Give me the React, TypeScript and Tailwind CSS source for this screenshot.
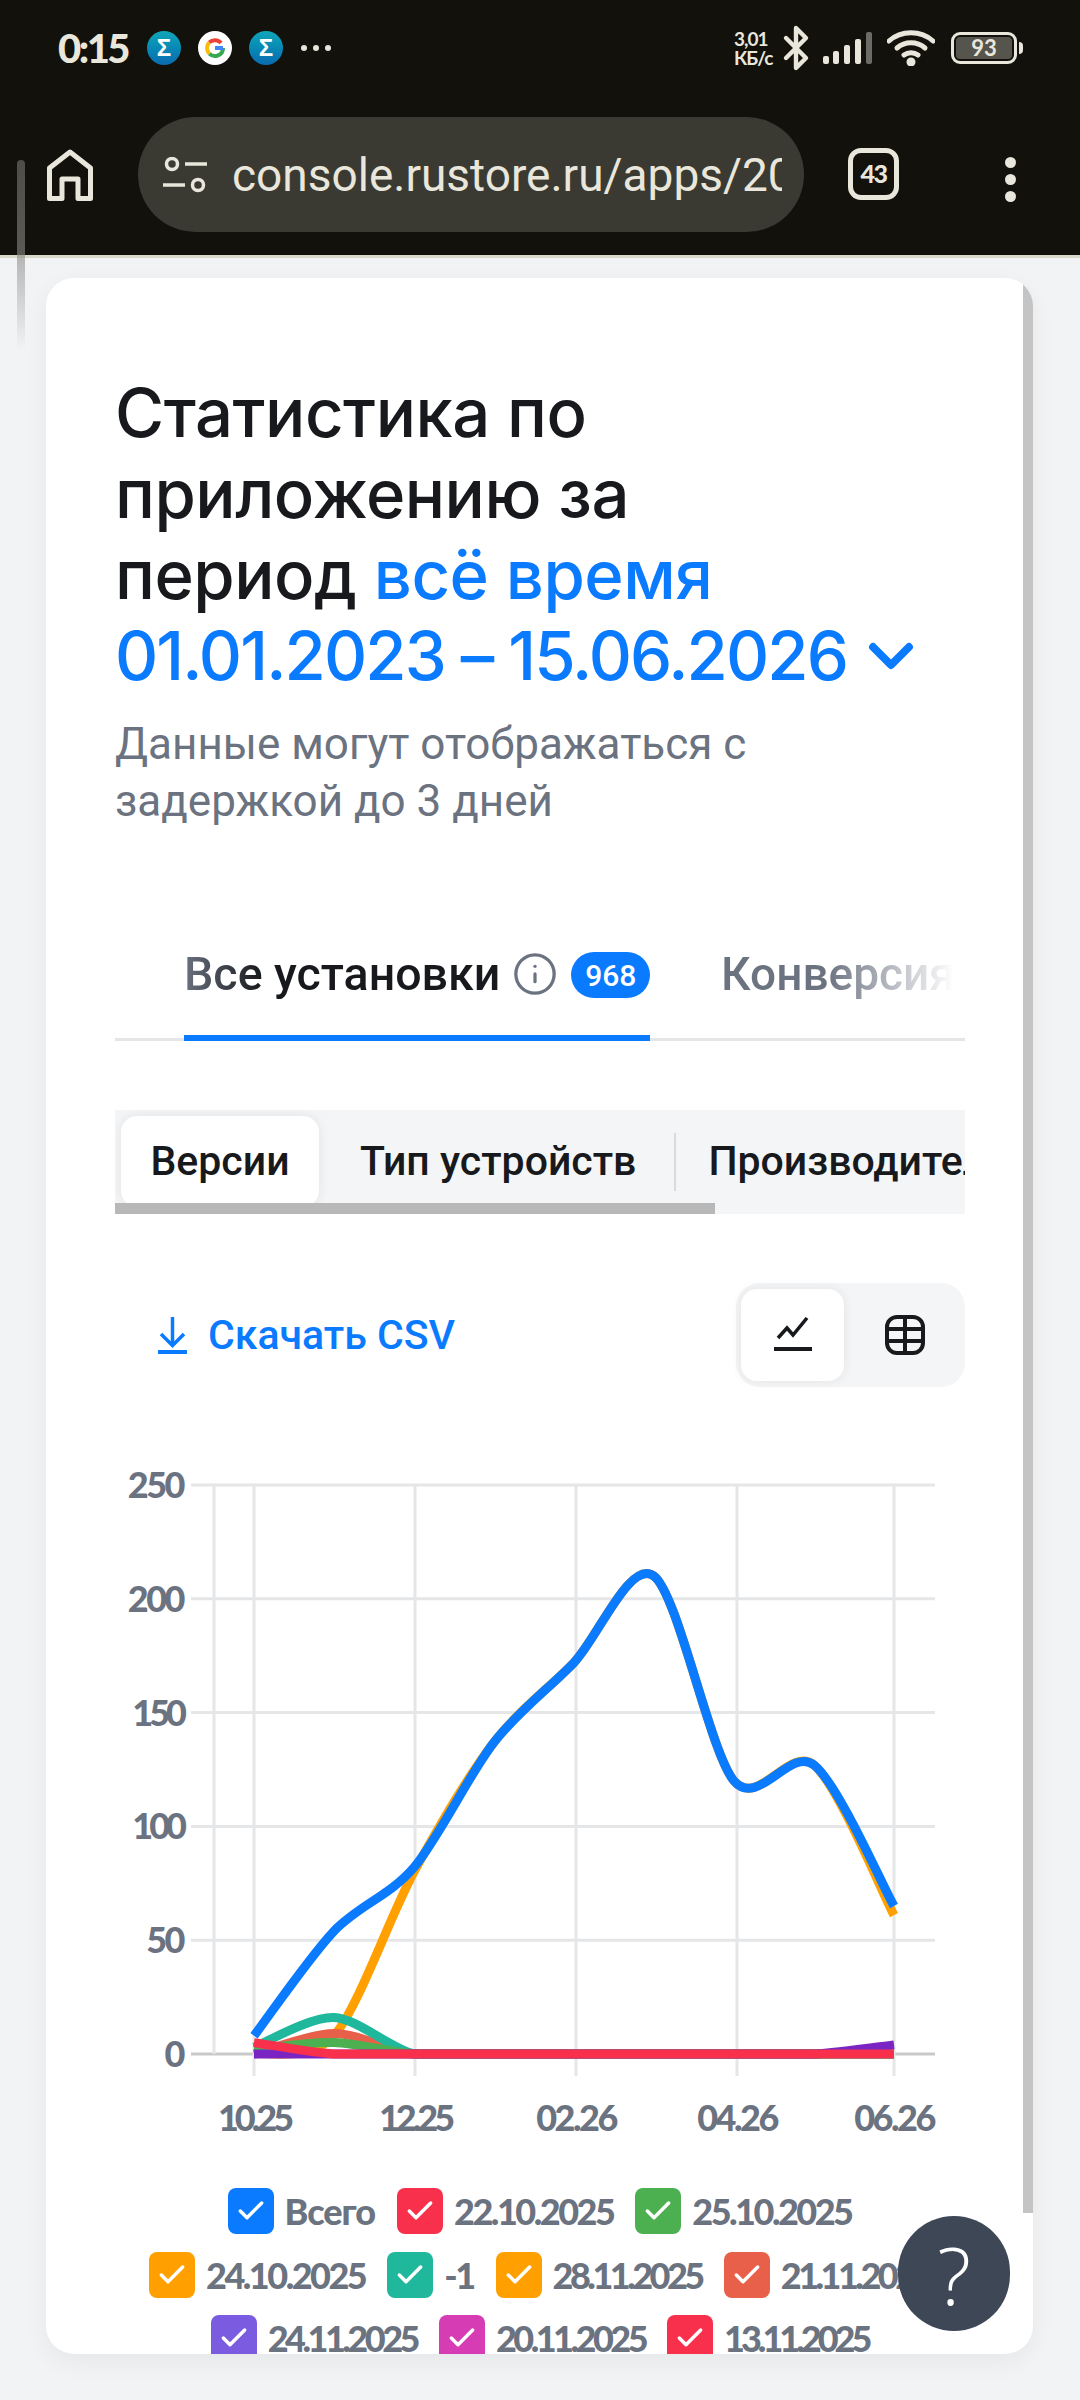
import * as React from "react";
import { Bluetooth, Check, ChevronDown, Info } from "lucide-react";

const CHART_FONT = "font-['Lato',sans-serif]";

const MONTH_STEP = 80;
const FIRST_MONTH_X = 208;
const ZERO_Y = 585;
const UNIT = 2.276;

const series: { color: string; values: number[] }[] = [
  { color: "#ffa000", values: [0, 8, 80, 137, 172, 210, 120, 127, 61] },
  { color: "#e9604a", values: [0, 9, 0, 0, 0, 0, 0, 0, 0] },
  { color: "#1fb89c", values: [3, 16, 0, 0, 0, 0, 0, 0, 0] },
  { color: "#4caf50", values: [2, 5, 0, 0, 0, 0, 0, 0, 0] },
  { color: "#7b24c4", values: [0, 0, 0, 0, 0, 0, 0, 0, 4] },
  { color: "#0a7aff", values: [8, 54, 82, 137, 172, 210, 120, 127, 65] },
  { color: "#f9304c", values: [5, 0, 0, 0, 0, 0, 0, 0, 0] },
];

const yTicks = [250, 200, 150, 100, 50, 0];
const xTicks = ["10.25", "12.25", "02.26", "04.26", "06.26"];

const legendRows: { label: string; color: string; tracking: string }[][] = [
  [
    { label: "Всего", color: "bg-[#0a7aff]", tracking: "tracking-[-1px]" },
    { label: "22.10.2025", color: "bg-[#f9304c]", tracking: "tracking-[-2.5px]" },
    { label: "25.10.2025", color: "bg-[#4caf50]", tracking: "tracking-[-2.5px]" },
  ],
  [
    { label: "24.10.2025", color: "bg-[#ffa000]", tracking: "tracking-[-2.5px]" },
    { label: "-1", color: "bg-[#1fb89c]", tracking: "tracking-[-2.5px]" },
    { label: "28.11.2025", color: "bg-[#ffa000]", tracking: "tracking-[-3.5px]" },
    { label: "21.11.2025", color: "bg-[#e9604a]", tracking: "tracking-[-3.5px]" },
  ],
  [
    { label: "24.11.2025", color: "bg-[#7b5ce0]", tracking: "tracking-[-3.5px]" },
    { label: "20.11.2025", color: "bg-[#d63cb4]", tracking: "tracking-[-3.5px]" },
    { label: "13.11.2025", color: "bg-[#f9304c]", tracking: "tracking-[-4px]" },
  ],
];

// smooth line through the monthly points, flat where the data is flat
function linePath(values: number[]) {
  const pts = values.map((v, i) => [FIRST_MONTH_X + i * MONTH_STEP, ZERO_Y - v * UNIT]);
  let d = `M${pts[0][0]} ${pts[0][1]}`;
  for (let i = 0; i < pts.length - 1; i++) {
    const p0 = pts[Math.max(i - 1, 0)];
    const p1 = pts[i];
    const p2 = pts[i + 1];
    const p3 = pts[Math.min(i + 2, pts.length - 1)];
    const flat = p1[1] === p2[1];
    const k = flat ? 0 : 0.15;
    d += ` C${p1[0] + (p2[0] - p0[0]) * k} ${p1[1] + (p2[1] - p0[1]) * k} ${p2[0] - (p3[0] - p1[0]) * k} ${p2[1] - (p3[1] - p1[1]) * k} ${p2[0]} ${p2[1]}`;
  }
  return d;
}

function Chart() {
  return (
    <svg viewBox="0 0 987 680" className="block h-[680px] w-[987px]">
      {yTicks.map((tick) => {
        const y = ZERO_Y - tick * UNIT;
        return (
          <g key={tick}>
            <line x1={145} x2={889} y1={y} y2={y} stroke={tick === 0 ? "#c9c9cb" : "#e5e6e8"} strokeWidth={3} />
            <text x={137} y={y + 13} textAnchor="end" fontSize={36} fontWeight={900} fill="#6b7280" letterSpacing={String(tick).includes("1") ? -4 : -2.5} fontFamily="Lato, sans-serif">
              {tick}
            </text>
          </g>
        );
      })}
      <line x1={168} x2={168} y1={16} y2={585} stroke="#e5e6e8" strokeWidth={3} />
      {xTicks.map((tick, i) => {
        const x = FIRST_MONTH_X + i * 2 * MONTH_STEP + (i === 4 ? 0 : i);
        return (
          <g key={tick}>
            <line x1={x} x2={x} y1={16} y2={607} stroke="#e5e6e8" strokeWidth={3} />
            <text x={x} y={662} textAnchor="middle" fontSize={36} fontWeight={900} fill="#6b7280" letterSpacing={tick.includes("1") ? -4 : -2.5} fontFamily="Lato, sans-serif">
              {tick}
            </text>
          </g>
        );
      })}
      {series.map((s) => (
        <path key={s.color} d={linePath(s.values)} fill="none" stroke={s.color} strokeWidth={9} />
      ))}
    </svg>
  );
}

function LegendItem({ label, color, tracking }: { label: string; color: string; tracking: string }) {
  return (
    <div className="flex shrink-0 items-center gap-[11px]">
      <span className={`flex h-[46px] w-[46px] items-center justify-center rounded-[8px] ${color}`}>
        <Check className="h-[32px] w-[32px] text-white" strokeWidth={2.6} />
      </span>
      <span className={`${CHART_FONT} text-[36px] leading-[46px] font-black text-[#6b7280] ${tracking}`}>{label}</span>
    </div>
  );
}

function SigmaBadge() {
  return (
    <span className="flex h-[34px] w-[34px] items-center justify-center rounded-full bg-gradient-to-b from-[#11a6b8] to-[#0b6bb0] font-['Liberation_Sans',sans-serif] text-[24px] leading-none font-bold text-white">
      Σ
    </span>
  );
}

function GoogleBadge() {
  return (
    <svg width="34" height="34" viewBox="0 0 34 34">
      <circle cx="17" cy="17" r="17" fill="#fff" />
      <path d="M25 17a8 8 0 0 1-13.7 5.6" fill="none" stroke="#34a853" strokeWidth="4" />
      <path d="M11.3 22.6a8 8 0 0 1 0-11.2" fill="none" stroke="#fbbc05" strokeWidth="4" />
      <path d="M11.3 11.4A8 8 0 0 1 23 12" fill="none" stroke="#ea4335" strokeWidth="4" />
      <path d="M17 17h8" fill="none" stroke="#4285f4" strokeWidth="4" />
    </svg>
  );
}

function StatusBar() {
  return (
    <div className="flex h-[96px] items-center justify-between pr-[58px] pl-[58px] text-[#e9e7dc]">
      <div className="flex items-center">
        <span className={`${CHART_FONT} w-[89px] text-[40px] leading-none font-black tracking-[-2.5px]`}>0:15</span>
        <div className="flex items-center gap-[17px]">
          <SigmaBadge />
          <GoogleBadge />
          <SigmaBadge />
        </div>
        <span className="ml-[18px] flex gap-[6px]">
          <span className="h-[6px] w-[6px] rounded-full bg-[#e9e7dc]" />
          <span className="h-[6px] w-[6px] rounded-full bg-[#e9e7dc]" />
          <span className="h-[6px] w-[6px] rounded-full bg-[#e9e7dc]" />
        </span>
      </div>
      <div className="-mr-[1px] flex items-center">
        <div className={`${CHART_FONT} flex w-[44px] flex-col text-[19px] leading-[19px] font-bold tracking-[-1px]`}>
          <span>3,01</span>
          <span>КБ/с</span>
        </div>
        <Bluetooth className="mr-[3px] ml-[-6px] h-[48px] w-[48px]" strokeWidth={2.2} />
        <svg width="50" height="32" viewBox="0 0 50 32">
          <rect x="0" y="24" width="6" height="8" rx="2" fill="#e9e7dc" />
          <rect x="10" y="19" width="6" height="13" rx="2" fill="#e9e7dc" />
          <rect x="21" y="13" width="6" height="19" rx="2" fill="#e9e7dc" />
          <rect x="32" y="7" width="6" height="25" rx="2" fill="#e9e7dc" />
          <rect x="43" y="0" width="6" height="32" rx="2" fill="#6d6c64" />
        </svg>
        <svg width="48" height="36" viewBox="0 0 48 36" fill="none" stroke="#e9e7dc" strokeWidth="5" strokeLinecap="round" className="ml-[14px]">
          <path d="M2 11C14 0 34 0 46 11" />
          <path d="M10 18c8-7 20-7 28 0" />
          <path d="M17 25c4-3 10-3 14 0" />
          <circle cx="24" cy="32" r="2" fill="#e9e7dc" />
        </svg>
        <div className="ml-[16px] flex items-center">
          <div className="flex h-[32px] w-[66px] items-center justify-center rounded-[9px] border-[3px] border-[#e9e7dc] p-[2px]">
            <span className={`${CHART_FONT} flex h-full w-full items-center justify-center rounded-[4px] bg-[#55544d] text-[22px] leading-none font-bold text-[#e9e7dc]`}>
              93
            </span>
          </div>
          <span className="ml-[2px] h-[12px] w-[4px] rounded-r-full bg-[#e9e7dc]" />
        </div>
      </div>
    </div>
  );
}

function BrowserBar() {
  return (
    <div className="flex h-[162px] items-start border-b-[3px] border-[#d9d9c9] pt-[21px] text-[#e9e7dc]">
      <svg width="46" height="52" viewBox="0 0 46 52" fill="none" stroke="#e9e7dc" strokeWidth="5" className="mt-[32px] ml-[47px]">
        <path d="M2.500 49.500V19L23 3l20.500 16v30.500H31V30H15v19.500Z" strokeLinejoin="round" />
      </svg>
      <div className="ml-[45px] flex h-[115px] w-[666px] items-center rounded-full bg-[#3a3a32] pr-[22px] pl-[25px]">
        <svg width="44" height="36" viewBox="0 0 44 36" fill="none" stroke="#e9e7dc" strokeWidth="3.500" className="shrink-0">
          <circle cx="9" cy="7" r="5.500" />
          <path d="M22 7h22M0 28h22" />
          <circle cx="35" cy="28" r="5.500" />
        </svg>
        <span className="ml-[25px] overflow-hidden font-['Roboto',sans-serif] text-[46px] leading-[60px] whitespace-nowrap text-[#e9e7dc]">
          console.rustore.ru/apps/2098
        </span>
      </div>
      <div className={`${CHART_FONT} mt-[31px] ml-[44px] flex h-[52px] w-[51px] items-center justify-center rounded-[13px] border-[5px] border-[#e9e7dc] text-[25px] font-black tracking-[-1.5px]`}>
        43
      </div>
      <div className="mt-[40px] ml-[106px] flex flex-col gap-[6px]">
        <span className="h-[11px] w-[11px] rounded-full bg-[#e9e7dc]" />
        <span className="h-[11px] w-[11px] rounded-full bg-[#e9e7dc]" />
        <span className="h-[11px] w-[11px] rounded-full bg-[#e9e7dc]" />
      </div>
    </div>
  );
}

export default function App() {
  return (
    <div className="relative h-[2400px] w-[1080px] overflow-hidden bg-[#f2f3f5] font-['Roboto',sans-serif]">
      <div className="bg-[#12110b]">
        <StatusBar />
        <BrowserBar />
      </div>
      {/* page scroll indicator of the browser */}
      <div className="absolute top-[160px] left-[17px] h-[190px] w-[8px] rounded-full bg-gradient-to-b from-[#77766f] via-[#8b8b88] to-transparent opacity-60" />

      <div className="relative mt-[20px] ml-[46px] h-[2076px] w-[987px] overflow-hidden rounded-[28px] bg-white shadow-[0_8px_24px_rgba(0,0,0,0.05)]">
        <h1 className="mt-[94px] ml-[69px] font-['Inter',sans-serif] text-[67px] leading-[81px] font-medium tracking-[-0.5px] text-[#17191c]">
          Статистика по
          <br />
          приложению за
          <br />
          период <span className="text-[#0a7aff]">всё время</span>
          <br />
          <span className="inline-flex items-center gap-[8px] tracking-[-1.9px] text-[#0a7aff]">
            01.01.2023 – 15.06.2026
            <ChevronDown className="h-[72px] w-[72px]" strokeWidth={2.6} />
          </span>
        </h1>
        <p className="mt-[20px] ml-[69px] text-[44px] leading-[57px] text-[#6b7280]">
          Данные могут отображаться с
          <br />
          задержкой до 3 дней
        </p>

        {/* main tabs */}
        <div className="relative mt-[117px] ml-[69px] flex h-[94px] w-[850px] overflow-hidden pl-[69px]">
          <div className="absolute right-0 bottom-0 left-0 h-[3px] bg-[#e4e5e7]" />
          <div className="relative flex h-[94px] w-[466px] shrink-0 items-start border-b-[6px] border-[#0a7aff]">
            <span className="bg-gradient-to-r from-[#6b7280] to-[#17191c] to-[25%] bg-clip-text text-[46.500px] leading-[54px] font-medium whitespace-nowrap text-transparent">
              Все установки
            </span>
            <Info className="mt-[4px] ml-[12px] h-[46px] w-[46px] shrink-0 text-[#6b7280]" strokeWidth={1.7} />
            <span className="mt-[5px] ml-[13px] flex h-[46px] w-[79px] shrink-0 items-center justify-center rounded-full bg-[#0a7aff] text-[30px] font-medium text-white">
              968
            </span>
          </div>
          <span className="ml-[71px] w-[233px] overflow-hidden bg-gradient-to-r from-[#6b7280] from-[45%] to-transparent bg-clip-text text-[46px] leading-[54px] font-medium whitespace-nowrap text-transparent">
            Конверсия
          </span>
        </div>

        {/* sub tabs */}
        <div className="relative mt-[69px] ml-[69px] flex h-[104px] w-[850px] items-start overflow-hidden bg-[#f4f5f6] pt-[6px] pl-[6px]">
          <div className="relative z-10 flex h-[91px] w-[198px] shrink-0 items-center justify-center rounded-[16px] bg-white text-[41px] font-medium text-[#17191c] shadow-[0_0_12px_rgba(0,0,0,0.08)]">
            Версии
          </div>
          <span className="mt-[19px] ml-[41px] shrink-0 text-[41px] leading-[52px] font-medium text-[#17191c]">Тип устройств</span>
          <span className="mt-[17px] ml-[38px] h-[58px] w-[2px] shrink-0 bg-[#d9dadc]" />
          <span className="mt-[19px] ml-[32px] shrink-0 text-[41px] leading-[52px] font-medium text-[#17191c]">Производитель</span>
          <div className="absolute bottom-0 left-0 z-20 h-[11px] w-[600px] bg-[#b8b8b8]" />
        </div>

        {/* actions */}
        <div className="mt-[69px] ml-[69px] flex h-[104px] w-[850px] items-center justify-between">
          <div className="ml-[43px] flex items-center gap-[21px] text-[#0a7aff]">
            <svg width="29" height="37" viewBox="0 0 29 37" fill="none" stroke="#0a7aff" strokeWidth="3.500">
              <path d="M14.500 0v28M3 17l11.500 11.500L26 17" />
              <path d="M0 35h29" strokeWidth="4" />
            </svg>
            <span className="text-[41px] leading-none font-medium">Скачать CSV</span>
          </div>
          <div className="flex h-[104px] w-[229px] items-start rounded-[24px] bg-[#f4f5f6] pt-[6px] pl-[5px]">
            <div className="flex h-[92px] w-[103px] items-center justify-center rounded-[16px] bg-white shadow-[0_0_12px_rgba(0,0,0,0.08)]">
              <svg width="38" height="36" viewBox="0 0 38 36" fill="none" stroke="#17191c" strokeWidth="3.500">
                <path d="M4 21l9-10 6 7L33 1" />
                <path d="M0 32h38" strokeWidth="4" strokeLinecap="round" />
              </svg>
            </div>
            <div className="flex h-[92px] w-[121px] items-center justify-center">
              <svg width="40" height="40" viewBox="0 0 40 40" fill="none" stroke="#17191c" strokeWidth="4">
                <rect x="2" y="2" width="36" height="36" rx="10" />
                <path d="M2 14h36M2 26h36M20 2v36" />
              </svg>
            </div>
          </div>
        </div>

        <div className="mt-[82px]">
          <Chart />
        </div>

        <div className="mt-[39px] flex flex-col gap-[17.500px]">
          {legendRows.map((row, i) => (
            <div key={i} className="flex justify-center gap-[22px]">
              {row.map((item) => (
                <LegendItem key={item.label} {...item} />
              ))}
            </div>
          ))}
        </div>

        {/* card scrollbar */}
        <div className="absolute top-0 right-0 h-[1935px] w-[10px] bg-[#c4c4c4]" />
      </div>

      {/* help button */}
      <div className="absolute top-[2216px] left-[898px] flex h-[115px] w-[112px] items-center justify-center rounded-full bg-[#3d4756] font-['Open_Sans',sans-serif] text-[80px] leading-none font-light text-white">
        ?
      </div>
    </div>
  );
}
